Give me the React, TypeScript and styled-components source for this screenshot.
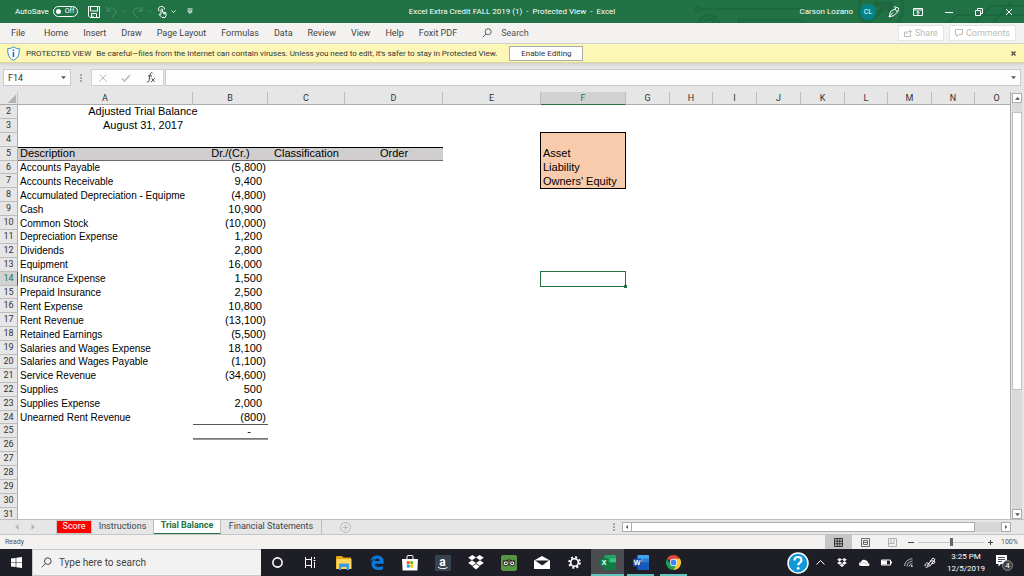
import React from "react";
import styled, { createGlobalStyle, css } from "styled-components";

const ui = `Roboto, "Open Sans", sans-serif`;
const sheetFont = `"Liberation Sans", Arial, sans-serif`;

const GlobalStyle = createGlobalStyle`
  * { box-sizing: border-box; }
  body { margin: 0; background: #e6e6e6; font-family: ${ui}; font-size: 9px; color: #444; }
  button, input { font: inherit; color: inherit; margin: 0; padding: 0; border: 0; border-radius: 0; background: none; outline: none; }
  button { cursor: pointer; white-space: nowrap; }
  svg { display: block; flex: none; }
`;

const Window = styled.div`
  display: flex;
  flex-direction: column;
  height: 100vh;
  overflow: hidden;
`;

/* Title bar */
const TitleBar = styled.header`
  position: relative;
  flex: none;
  height: 23px;
  background: #217346;
  color: #fff;
  display: grid;
  grid-template-columns: 1fr auto 1fr;
  align-items: center;
  font-size: 8px;
`;
const Circuit = styled.svg`
  position: absolute;
  right: 0;
  top: 0;
`;
const QuickAccess = styled.div`
  display: flex;
  align-items: center;
  gap: 4px;
  padding-left: 15px;
`;
const Toggle = styled.button`
  display: flex;
  align-items: center;
  gap: 4px;
  width: 25px;
  height: 11px;
  border: 1px solid #fff;
  border-radius: 6px;
  padding-left: 2px;
  font-size: 7px;
  line-height: 9px;
`;
const Knob = styled.span`
  width: 5px;
  height: 5px;
  border-radius: 50%;
  background: #fff;
`;
const IconRow = styled.div`
  display: flex;
  align-items: center;
  gap: 6px;
  padding-left: 6px;
`;
const BarButton = styled.button<{ $dim?: boolean }>`
  display: flex;
  align-items: center;
  gap: 4px;
  color: ${(p) => (p.$dim ? "#4d9068" : "#fff")};
`;
const DocTitle = styled.div`
  white-space: pre;
`;
const Account = styled.div`
  position: relative;
  display: flex;
  justify-content: flex-end;
  align-items: center;
  padding-right: 11px;
`;
const Avatar = styled.span`
  width: 16px;
  height: 16px;
  margin: 0 12px 0 7px;
  border-radius: 50%;
  background: #038387;
  font-size: 7px;
  line-height: 16px;
  text-align: center;
`;
const WindowButtons = styled.div`
  display: flex;
  align-items: center;
  gap: 22px;
`;
const AccountTools = styled.div`
  display: flex;
  align-items: center;
  gap: 14px;
  margin-right: 22px;
`;

/* Ribbon tabs */
const Ribbon = styled.nav`
  flex: none;
  height: 21px;
  display: flex;
  align-items: center;
  padding: 0 8px 0 11px;
  background: #f3f2f1;
  border-bottom: 1px solid #d2d0ce;
`;
const RibbonTabs = styled.div`
  display: flex;
  gap: 15px;
`;
const RibbonTab = styled.button`
  text-align: left;
  &:first-child { width: 18px; }
`;
const SearchLabel = styled.label`
  display: flex;
  align-items: center;
  gap: 9px;
  margin-left: 25px;
  flex: 1;
`;
const SearchInput = styled.input`
  width: 80px;
  &::placeholder { color: #555; opacity: 1; }
`;
const GhostButton = styled.button`
  display: flex;
  align-items: center;
  justify-content: center;
  gap: 3px;
  height: 16px;
  padding: 0 5px;
  margin-left: 5px;
  border: 1px solid #e6e4e2;
  background: #fff;
  color: #bdbbb9;
`;

/* Protected view notice */
const Notice = styled.div`
  flex: none;
  height: 19px;
  display: flex;
  align-items: center;
  padding: 0 8px 0 7px;
  background: #fcf7b6;
  border-bottom: 1px solid #dcd68e;
  font-size: 8px;
  color: #333;
`;
const NoticeTitle = styled.span`
  margin: 0 5px 0 6px;
  white-space: nowrap;
`;
const NoticeText = styled.span`
  white-space: nowrap;
`;
const EnableButton = styled.button`
  width: 74px;
  height: 15px;
  margin-left: 12px;
  border: 1px solid #ababab;
  background: #fdfdfd;
`;
const CloseNotice = styled.button`
  margin-left: auto;
`;

/* Formula bar */
const FormulaBar = styled.div`
  flex: none;
  height: 29px;
  display: flex;
  align-items: center;
  padding: 0 3px;
  background: linear-gradient(#d4d4d4, #e6e6e6 4px);
`;
const Field = styled.div<{ $grow?: boolean }>`
  display: flex;
  align-items: center;
  height: 17px;
  width: ${(p) => (p.$grow ? "auto" : "68px")};
  flex: ${(p) => (p.$grow ? "1" : "none")};
  padding: 0 4px;
  border: 1px solid #c8c8c8;
  background: #fdfdfd;
  color: #555;
`;
const FieldInput = styled.input`
  flex: 1;
  min-width: 0;
  color: #333;
`;
const Dots = styled.span<{ $compact?: boolean }>`
  width: 2px;
  height: 8px;
  margin: ${(p) => (p.$compact ? "0 7px 0 0" : "0 9px")};
  background: repeating-linear-gradient(#a8a8a8 0 2px, transparent 2px 3px);
`;
const FormulaTools = styled.div`
  display: flex;
  align-items: center;
  justify-content: space-around;
  width: 73px;
  height: 17px;
  margin-right: 1px;
  border: 1px solid #d0d0d0;
  background: #fdfdfd;
`;

/* Sheet */
const SheetArea = styled.main`
  flex: 1;
  min-height: 0;
  display: flex;
`;
const SheetView = styled.div`
  flex: 1;
  min-width: 0;
  overflow: hidden;
  background: linear-gradient(#e6e6e6 13px, #fff 13px);
  border-right: 1px solid #ababab;
`;
const Grid = styled.table`
  width: 1019px;
  height: 430px;
  table-layout: fixed;
  border-spacing: 0;
  font-family: ${sheetFont};
  font-size: 11px;
  line-height: 11px;
  color: #000;
`;
const Col = styled.col<{ $width: number }>`
  width: ${(p) => p.$width}px;
`;
const ColHead = styled.th<{ $active?: boolean }>`
  height: 13px;
  padding: 0;
  font: 9px/11px ${ui};
  color: ${(p) => (p.$active ? "#217346" : "#333")};
  background: ${(p) => (p.$active ? "#d2d2d2" : "#e6e6e6")};
  border-right: 1px solid #bdbdbd;
  border-bottom: 1px solid ${(p) => (p.$active ? "#217346" : "#ababab")};
`;
const Corner = styled.td`
  padding: 0;
  background: linear-gradient(135deg, transparent 50%, #b4b4b4 50%) 8px 3px / 8px 8px no-repeat #e6e6e6;
  border-right: 1px solid #c6c6c6;
  border-bottom: 1px solid #ababab;
`;
const RowHead = styled.th<{ $active?: boolean }>`
  padding: 0;
  font: 9px/11px ${ui};
  color: ${(p) => (p.$active ? "#217346" : "#333")};
  background: ${(p) => (p.$active ? "#d2d2d2" : "#e6e6e6")};
  border-right: 1px solid ${(p) => (p.$active ? "#217346" : "#ababab")};
  border-bottom: 1px solid #bdbdbd;
`;
type CellKind = "name" | "head" | "box" | "total" | "grand";
const Cell = styled.td<{ $kind?: CellKind; $align?: string; $edges?: string }>`
  position: relative;
  padding: 0 2px;
  white-space: nowrap;
  text-align: ${(p) => p.$align || "left"};
  ${(p) => p.$kind === "name" && css`font-size: 10px;`}
  ${(p) => p.$kind === "head" && css`background: #d0cece; box-shadow: inset 0 1px #000, inset 0 -1px #6a6a6a;`}
  ${(p) => p.$kind === "box" && css`background: #f8cbad;`}
  ${(p) => p.$kind === "total" && css`box-shadow: 0 1px #555;`}
  ${(p) => p.$kind === "grand" && css`box-shadow: 0 1px #777, 0 2px #999; padding-right: 17px;`}
  ${(p) => p.$edges && css`box-shadow: ${p.$edges};`}
`;
const Amount = styled.span<{ $negative: boolean }>`
  padding-right: ${(p) => (p.$negative ? 0 : 4)}px;
`;
const Selection = styled.div`
  position: absolute;
  inset: -1px 0 -1px -1px;
  border: 1px solid #217346;
  &::after {
    content: "";
    position: absolute;
    right: -2px;
    bottom: -2px;
    width: 3px;
    height: 3px;
    background: #217346;
  }
`;

/* Scroll bars */
const VScroll = styled.div`
  flex: none;
  width: 13px;
  display: flex;
  flex-direction: column;
  padding: 1px 1px 0 1px;
`;
const ScrollButton = styled.button`
  flex: none;
  display: flex;
  align-items: center;
  justify-content: center;
  width: 10px;
  height: 10px;
  border: 1px solid #ababab;
  background: #fff;
  color: #555;
`;
const VTrack = styled.div`
  flex: 1;
  width: 10px;
  padding: 9px 0 0;
  background: #dadada;
`;
const VThumb = styled.div`
  height: 70%;
  border: 1px solid #c0c0c0;
  background: #fff;
`;

/* Sheet tabs */
const TabStrip = styled.div`
  flex: none;
  height: 16px;
  display: flex;
  align-items: stretch;
  border-top: 1px solid #bdbdbd;
  border-bottom: 1px solid #c6c6c6;
  background: #e6e6e6;
`;
const TabArrows = styled.div`
  display: flex;
  align-items: center;
  gap: 10px;
  width: 56px;
  padding-left: 14px;
  color: #b4b4b4;
`;
const SheetTab = styled.button<{ $tone?: "red" | "active"; $width: number }>`
  width: ${(p) => p.$width}px;
  padding-bottom: 3px;
  border-right: 1px solid #bdbdbd;
  line-height: 10px;
  text-align: center;
  ${(p) => p.$tone === "red" && css`background: #f00; color: #fff; border: 1px solid #c6c6c6;`}
  ${(p) => p.$tone === "active" && css`background: #fff; color: #217346; font-weight: 700; border-bottom: 1px solid #217346;`}
`;
const AddSheet = styled.button`
  margin-left: 18px;
`;
const HScroll = styled.div`
  width: 398px;
  margin-left: auto;
  margin-right: 13px;
  display: flex;
  align-items: center;
`;
const HTrack = styled.div`
  flex: 1;
  height: 10px;
  background: #d6d6d6;
`;
const HThumb = styled.div`
  width: 93%;
  height: 10px;
  border: 1px solid #ababab;
  border-left: 0;
  background: #fff;
`;

/* Status bar */
const StatusBar = styled.footer`
  flex: none;
  height: 14px;
  display: flex;
  align-items: center;
  padding: 0 5px;
  background: #f3f2f1;
  font-size: 7px;
  color: #555;
`;
const ViewButton = styled.button<{ $active?: boolean; $first?: boolean }>`
  display: flex;
  align-items: center;
  justify-content: center;
  width: 27px;
  height: 14px;
  margin-left: ${(p) => (p.$first ? "auto" : "0")};
  color: ${(p) => (p.$active ? "#333" : "#666")};
  background: ${(p) => (p.$active ? "#c6c6c6" : "none")};
`;
const ZoomStep = styled.button`
  padding-left: 2px;
`;
const Zoom = styled.input`
  appearance: none;
  width: 66px;
  height: 8px;
  margin: 0 4px;
  background: linear-gradient(#c8c8c8, #c8c8c8) center / 100% 1px no-repeat;
  &::-webkit-slider-thumb { appearance: none; width: 3px; height: 8px; background: #666; }
`;
const ZoomValue = styled.span`
  width: 18px;
  margin-left: 8px;
`;

/* Taskbar */
const Taskbar = styled.div`
  flex: none;
  height: 27px;
  display: flex;
  align-items: stretch;
  background: #1e1f26;
  color: #fff;
`;
const StartButton = styled.button`
  width: 32px;
  display: flex;
  align-items: center;
  justify-content: center;
`;
const TaskSearch = styled.label`
  width: 229px;
  display: flex;
  align-items: center;
  gap: 7px;
  padding-left: 8px;
  background: #f2f2f2;
  border: 1px solid #c8c8c8;
  border-right: 0;
  color: #333;
  font-size: 10px;
`;
const TaskInput = styled.input`
  flex: 1;
  min-width: 0;
  &::placeholder { color: #444; opacity: 1; }
`;
const TaskButton = styled.button<{ $open?: boolean; $active?: boolean }>`
  width: 33px;
  display: flex;
  align-items: center;
  justify-content: center;
  background: ${(p) => (p.$active ? "#4b4c50" : "none")};
  ${(p) => p.$open && css`
    background-image: linear-gradient(#62c5bd, #62c5bd);
    background-size: ${p.$active ? "100%" : "27px"} 2px;
    background-position: bottom center;
    background-repeat: no-repeat;
  `}
`;
const Tray = styled.div`
  display: flex;
  align-items: center;
  margin-left: auto;
  padding-right: 9px;
`;
const TrayButton = styled.button`
  width: 22px;
  display: flex;
  align-items: center;
  justify-content: center;
`;
const Clock = styled.div`
  width: 44px;
  margin: 0 5px 0 3px;
  text-align: center;
  font-size: 8px;
  line-height: 12px;
`;

const Caret = () => (
  <svg width="5" height="5" viewBox="0 0 6 6" aria-hidden>
    <path d="M.5 1.800 3 4.200 5.500 1.800" fill="none" stroke="currentColor" />
  </svg>
);
const arrowRotation = { down: 0, up: 180, left: 90, right: 270 };
const Arrow = ({ dir, size = 5 }: { dir: keyof typeof arrowRotation; size?: number }) => (
  <svg width={size} height={size} viewBox="0 0 6 6" aria-hidden>
    <path d="M0 1.500h6L3 4.800z" fill="currentColor" transform={`rotate(${arrowRotation[dir]} 3 3)`} />
  </svg>
);
const Magnifier = ({ size }: { size: number }) => (
  <svg width={size} height={size} viewBox="0 0 12 12" fill="none" stroke="currentColor" aria-hidden>
    <circle cx="7.400" cy="4.500" r="3.600" />
    <path d="M4.800 7.200.8 11.200" />
  </svg>
);
const Dropbox = ({ size }: { size: number }) => (
  <svg width={size} height={size} viewBox="0 0 16 16" fill="#fff" aria-hidden>
    <path d="M4.400 0 8 2.600 4 5.300.2 2.800zM11.600 0 8 2.600l4 2.700 3.800-2.500zM.2 8 4 5.300l4 2.700-3.600 2.700zM15.800 8 12 5.300 8 8l3.600 2.700zM4.400 11.600 8 9l3.600 2.600L8 14.400z" />
  </svg>
);
const OfficeTile = ({ letter, colors }: { letter: string; colors: string[] }) => (
  <svg width="16" height="15" viewBox="0 0 16 15" aria-hidden>
    <path d="M4.500 0H15q1 0 1 1v6.500H4.500z" fill={colors[0]} />
    <path d="M10 3.500h6v4h-6z" fill={colors[1]} />
    <path d="M4.500 7.500H16V14q0 1-1 1H4.500z" fill={colors[2]} />
    <rect y="3.500" width="8.500" height="8" rx=".8" fill={colors[3]} />
    <text x="4.200" y="10" fontSize="7" fontWeight="700" fontFamily="Open Sans" fill="#fff" textAnchor="middle">{letter}</text>
  </svg>
);

const menu = ["File", "Home", "Insert", "Draw", "Page Layout", "Formulas", "Data", "Review", "View", "Help", "Foxit PDF"];
const columns: [string, number][] = [
  ["A", 175], ["B", 75], ["C", 77], ["D", 98], ["E", 98], ["F", 85], ["G", 44], ["H", 43],
  ["I", 44], ["J", 44], ["K", 44], ["L", 43], ["M", 44], ["N", 43], ["O", 44],
];
const accounts: Record<number, [string, string]> = {
  6: ["Accounts Payable", "(5,800)"],
  7: ["Accounts Receivable", "9,400"],
  8: ["Accumulated Depreciation - Equipme", "(4,800)"],
  9: ["Cash", "10,900"],
  10: ["Common Stock", "(10,000)"],
  11: ["Depreciation Expense", "1,200"],
  12: ["Dividends", "2,800"],
  13: ["Equipment", "16,000"],
  14: ["Insurance Expense", "1,500"],
  15: ["Prepaid Insurance", "2,500"],
  16: ["Rent Expense", "10,800"],
  17: ["Rent Revenue", "(13,100)"],
  18: ["Retained Earnings", "(5,500)"],
  19: ["Salaries and Wages Expense", "18,100"],
  20: ["Salaries and Wages Payable", "(1,100)"],
  21: ["Service Revenue", "(34,600)"],
  22: ["Supplies", "500"],
  23: ["Supplies Expense", "2,000"],
  24: ["Unearned Rent Revenue", "(800)"],
};
const boxSides = "-1px 0 #000, inset -1px 0 #000";
const legend: Record<number, [string, string]> = {
  4: ["", `${boxSides}, 0 -1px #000, -1px -1px #000`],
  5: ["Asset", boxSides],
  6: ["Liability", boxSides],
  7: ["Owners' Equity", `${boxSides}, 0 1px #000, -1px 1px #000`],
};
const rowNumbers = Array.from({ length: 30 }, (_, i) => i + 2);

function SheetRow({ n }: { n: number }) {
  const account = accounts[n];
  const note = legend[n];
  let left: React.ReactNode;
  if (n === 2 || n === 3) {
    left = (
      <>
        <Cell colSpan={2} $align="center">{n === 2 ? "Adjusted Trial Balance" : "August 31, 2017"}</Cell>
        <Cell /><Cell />
      </>
    );
  } else if (n === 5) {
    left = (
      <>
        <Cell $kind="head">Description</Cell>
        <Cell $kind="head" $align="center">Dr./(Cr.)</Cell>
        <Cell $kind="head" $align="center">Classification</Cell>
        <Cell $kind="head" $align="center">Order</Cell>
      </>
    );
  } else {
    left = (
      <>
        <Cell $kind="name">{account?.[0]}</Cell>
        <Cell $align="right" $kind={n === 24 ? "total" : n === 25 ? "grand" : undefined}>
          {account && <Amount $negative={account[1].startsWith("(")}>{account[1]}</Amount>}
          {n === 25 && "-"}
        </Cell>
        <Cell /><Cell />
      </>
    );
  }
  return (
    <tr>
      <RowHead scope="row" $active={n === 14}>{n}</RowHead>
      {left}
      <Cell />
      <Cell $kind={note ? "box" : undefined} $edges={note?.[1]}>
        {note?.[0]}
        {n === 14 && <Selection />}
      </Cell>
      <Cell colSpan={9} />
    </tr>
  );
}

export default function App() {
  return (
    <Window>
      <GlobalStyle />
      <TitleBar>
        <Circuit width="340" height="23" viewBox="0 0 340 23" fill="none" stroke="#1d683e" strokeWidth="2" aria-hidden>
          <circle cx="14" cy="9" r="2.500" />
          <path d="M17 9h104M60 20h54l9 4M262 24l12-9h66M290 24l16-18h34M308 24l20-23" />
          <circle cx="25" cy="25" r="10" /><circle cx="25" cy="25" r="6" />
          <circle cx="57" cy="21" r="2.500" />
          <circle cx="197" cy="8" r="22" strokeWidth="3" />
          <path d="m182 24 22-20M190 4h16v16" strokeWidth="5" />
        </Circuit>
        <QuickAccess>
          <span>AutoSave</span>
          <Toggle role="switch" aria-checked="false" aria-label="AutoSave"><Knob />Off</Toggle>
          <IconRow>
            <BarButton aria-label="Save">
              <svg width="12" height="12" viewBox="0 0 12 12" fill="none" stroke="currentColor"><path d="M.5.500h11v11H2L.5 10zM2.500.500v4.500h7V.500M3.500 11.500v-4h5v4M5 9.500v2" /></svg>
            </BarButton>
            <BarButton $dim aria-label="Undo">
              <svg width="11" height="12" viewBox="0 0 11 12" fill="none" stroke="currentColor"><path d="M1 1v4h4M1 5c2-3 5-4 7.500-2 2 2 1.500 4-.5 6L5.500 11.500" /></svg>
              <Caret />
            </BarButton>
            <BarButton $dim aria-label="Redo">
              <svg width="11" height="12" viewBox="0 0 11 12" fill="none" stroke="currentColor"><path d="M10 1v4H6M10 5C8 2 5 1 2.500 3c-2 2-1.500 4 .5 6l2.500 2.500" /></svg>
              <Caret />
            </BarButton>
            <BarButton aria-label="Touch or mouse mode">
              <svg width="9" height="12" viewBox="0 0 9 12" fill="none" stroke="currentColor"><path d="M1.300 5.300A3 3 0 1 1 6.500 3.500M3 8V3.500q.8-1.400 1.500 0V6l3.500.8V9.500L7 11.500H4L1 8.500q.8-1 2 0M5.500 6.500V8M6.800 7v1.500" /></svg>
              <Caret />
            </BarButton>
            <BarButton aria-label="Customize quick access">
              <svg width="11" height="7" viewBox="-5 0 11 7" fill="none" stroke="currentColor"><path d="M.5 1h5M.8 3 3 5.500 5.200 3z" /></svg>
            </BarButton>
          </IconRow>
        </QuickAccess>
        <DocTitle>{"Excel Extra Credit FALL 2019 (1)  -  Protected View  -  Excel"}</DocTitle>
        <Account>
          <span>Carson Lozano</span>
          <Avatar>CL</Avatar>
          <AccountTools>
            <BarButton aria-label="Pen">
              <svg width="11" height="12" viewBox="0 0 11 12" fill="none" stroke="currentColor"><path d="m1 11 1.500-5.500L7 3l2.500 3L6 9.500zM1 11l4-4.500M7 3l2-2 2 2-1.500 3M8 .5 6 1.500" /></svg>
            </BarButton>
            <BarButton aria-label="Ribbon display options">
              <svg width="10" height="8" viewBox="0 0 10 8" fill="none" stroke="currentColor"><path d="M.5.500h9v7h-9zM.5 2h9M5 7V3.500M3.300 5 5 3.400 6.700 5" /></svg>
            </BarButton>
          </AccountTools>
          <WindowButtons>
            <BarButton aria-label="Minimize"><svg width="8" height="8" viewBox="0 0 8 8"><path d="M0 4.500h8" stroke="currentColor" /></svg></BarButton>
            <BarButton aria-label="Restore"><svg width="8" height="8" viewBox="0 0 8 8" fill="none" stroke="currentColor"><path d="M.5 2.500h5v5h-5zM2.500 2.500v-2h5v5h-2" /></svg></BarButton>
            <BarButton aria-label="Close"><svg width="8" height="8" viewBox="0 0 8 8"><path d="m1 1 6 6M7 1 1 7" stroke="currentColor" /></svg></BarButton>
          </WindowButtons>
        </Account>
      </TitleBar>

      <Ribbon>
        <RibbonTabs>{menu.map((m) => <RibbonTab key={m}>{m}</RibbonTab>)}</RibbonTabs>
        <SearchLabel>
          <Magnifier size={10} />
          <SearchInput aria-label="Search" placeholder="Search" />
        </SearchLabel>
        <GhostButton>
          <svg width="8" height="8" viewBox="0 0 8 8" fill="none" stroke="currentColor"><path d="M2.500 3H.5v4.500h6V5M2.500 5C2.500 3 4 2.500 7 2.500M5.500.500l2 2-2 2" /></svg>
          Share
        </GhostButton>
        <GhostButton>
          <svg width="8" height="8" viewBox="0 0 8 8" fill="none" stroke="currentColor"><path d="M.5.500h7v5H4l-2 2v-2H.5z" /></svg>
          Comments
        </GhostButton>
      </Ribbon>

      <Notice role="alert">
        <svg width="13" height="15" viewBox="0 0 13 15" aria-hidden>
          <path d="M6.500.8c1.700 1.300 3.600 1.900 5.800 1.900 0 5.300-.6 9-5.800 11.600C1.300 11.700.7 8 .7 2.700 2.900 2.700 4.800 2.100 6.500.8z" fill="#fff" stroke="#2b88c8" />
          <path d="M6.500 3.500v1.500M6.500 6v5" stroke="#2070b8" strokeWidth="1.600" />
        </svg>
        <NoticeTitle>PROTECTED VIEW</NoticeTitle>
        <NoticeText>Be careful—files from the Internet can contain viruses. Unless you need to edit, it's safer to stay in Protected View.</NoticeText>
        <EnableButton>Enable Editing</EnableButton>
        <CloseNotice aria-label="Close message">
          <svg width="5" height="5" viewBox="0 0 5 5"><path d="m.5.500 4 4M4.500.500l-4 4" stroke="#444" strokeWidth="1.200" /></svg>
        </CloseNotice>
      </Notice>

      <FormulaBar>
        <Field>
          <FieldInput aria-label="Name box" defaultValue="F14" />
          <Arrow dir="down" size={5} />
        </Field>
        <Dots />
        <FormulaTools>
          <button aria-label="Cancel"><svg width="8" height="8" viewBox="0 0 8 8"><path d="m.5.500 7 7M7.500.500l-7 7" stroke="#b8b8b8" /></svg></button>
          <button aria-label="Enter"><svg width="10" height="8" viewBox="0 0 10 8"><path d="m1 4.500 2.500 2.500L9 1" fill="none" stroke="#b8b8b8" strokeWidth="1.500" /></svg></button>
          <button aria-label="Insert function">
            <svg width="10" height="11" viewBox="0 0 10 11" fill="none" stroke="#444"><path d="M6.500 1C5 0 4.300 1.200 4 3L3 8.500C2.700 10 2 10.500.8 10M2 4h4" /><path d="m5.500 6 3 4M9 6l-4 4" strokeWidth=".9" /></svg>
          </button>
        </FormulaTools>
        <Field $grow>
          <FieldInput aria-label="Formula bar" />
          <Arrow dir="down" size={5} />
        </Field>
      </FormulaBar>

      <SheetArea>
        <SheetView>
          <Grid>
            <colgroup>
              <Col $width={18} />
              {columns.map(([c, w]) => <Col key={c} $width={w} />)}
            </colgroup>
            <thead>
              <tr>
                <Corner />
                {columns.map(([c]) => <ColHead key={c} scope="col" $active={c === "F"}>{c}</ColHead>)}
              </tr>
            </thead>
            <tbody>{rowNumbers.map((n) => <SheetRow key={n} n={n} />)}</tbody>
          </Grid>
        </SheetView>
        <VScroll>
          <ScrollButton aria-label="Scroll up"><Arrow dir="up" /></ScrollButton>
          <VTrack><VThumb /></VTrack>
          <ScrollButton aria-label="Scroll down"><Arrow dir="down" /></ScrollButton>
        </VScroll>
      </SheetArea>

      <TabStrip>
        <TabArrows><Arrow dir="left" size={6} /><Arrow dir="right" size={6} /></TabArrows>
        <SheetTab $width={36} $tone="red">Score</SheetTab>
        <SheetTab $width={62}>Instructions</SheetTab>
        <SheetTab $width={67} $tone="active">Trial Balance</SheetTab>
        <SheetTab $width={101}>Financial Statements</SheetTab>
        <AddSheet aria-label="New sheet">
          <svg width="11" height="11" viewBox="0 0 11 11" fill="none" stroke="#b8b8b8"><circle cx="5.500" cy="5.500" r="5" /><path d="M5.500 3v5M3 5.500h5" /></svg>
        </AddSheet>
        <HScroll>
          <Dots $compact />
          <ScrollButton aria-label="Scroll left"><Arrow dir="left" size={4} /></ScrollButton>
          <HTrack><HThumb /></HTrack>
          <ScrollButton aria-label="Scroll right"><Arrow dir="right" size={4} /></ScrollButton>
        </HScroll>
      </TabStrip>

      <StatusBar>
        <span>Ready</span>
        <ViewButton $active $first aria-label="Normal view">
          <svg width="9" height="9" viewBox="0 0 9 9" fill="none" stroke="currentColor"><path d="M.5.500h8v8h-8zM3.200.500v8M5.800.500v8M.5 3.200h8M.5 5.800h8" /></svg>
        </ViewButton>
        <ViewButton aria-label="Page layout view">
          <svg width="9" height="9" viewBox="0 0 9 9" fill="none" stroke="currentColor"><path d="M.5.500h8v8h-8zM2.500 2.500h4v4h-4zM3 4.500h3" /></svg>
        </ViewButton>
        <ViewButton aria-label="Page break preview">
          <svg width="9" height="9" viewBox="0 0 9 9" fill="none" stroke="#b0b0b0"><path d="M.5.500h8v8h-8zM3 .5v5h3V.500M.5 5.500H3" /></svg>
        </ViewButton>
        <ZoomStep aria-label="Zoom out"><svg width="6" height="6" viewBox="0 0 6 6"><path d="M0 3.500h6" stroke="#444" /></svg></ZoomStep>
        <Zoom type="range" aria-label="Zoom" defaultValue={50} />
        <button aria-label="Zoom in"><svg width="5" height="5" viewBox="0 0 5 5"><path d="M0 2.500h5M2.500 0v5" stroke="#444" /></svg></button>
        <ZoomValue>100%</ZoomValue>
      </StatusBar>

      <Taskbar>
        <StartButton aria-label="Start">
          <svg width="11" height="11" viewBox="0 0 11 11" fill="#fff"><path d="M0 1.600 4.700.900v4.300H0zM5.300.800 11 0v5.200H5.300zM0 5.800h4.700v4.300L0 9.400zM5.300 5.800H11V11l-5.700-.8z" /></svg>
        </StartButton>
        <TaskSearch>
          <Magnifier size={11} />
          <TaskInput aria-label="Type here to search" placeholder="Type here to search" />
        </TaskSearch>
        <TaskButton aria-label="Cortana"><svg width="11" height="11" viewBox="0 0 11 11"><circle cx="5.500" cy="5.500" r="4.600" fill="none" stroke="#fff" strokeWidth="1.600" /></svg></TaskButton>
        <TaskButton aria-label="Task view">
          <svg width="11" height="11" viewBox="0 0 11 11" fill="none" stroke="#fff"><path d="M.5 0v2.500h6V0M.5 2.500v6h6v-6M.5 11V8.500M6.500 8.500V11M9.500 0v2M9.500 5v6M8.500 3.500h2" /></svg>
        </TaskButton>
        <TaskButton aria-label="File Explorer">
          <svg width="16" height="14" viewBox="0 0 16 14"><path d="M0 1q0-1 1-1h5l1.500 1.500H15V13H0z" fill="#e5a50e" /><path d="M.5 3h15v10H.5z" fill="#ffd55c" /><path d="M3 14V8.500q0-1 1-1h8q1 0 1 1V14h-2.500v-3h-5v3z" fill="#3a9be0" /></svg>
        </TaskButton>
        <TaskButton aria-label="Edge">
          <svg width="14" height="15" viewBox="0 0 14 15"><path d="M.3 6.800C1 2.500 3.800.400 7.200.400c4 0 6.500 2.800 6.500 6.500v1.800H4.600c.2 2.300 2 3.300 4.200 3.300 1.500 0 2.900-.4 4.100-1.100v3c-1.300.7-3 1.100-4.700 1.100C4.200 15 1.600 12.500 1.600 9.300c0-2.500 1.300-4.500 3.500-5.600C3 3.900 1.200 5.200.3 6.800zM4.700 6h5c0-1.600-.8-2.600-2.300-2.600S5 4.400 4.700 6z" fill="#0a7bdc" /></svg>
        </TaskButton>
        <TaskButton aria-label="Store">
          <svg width="16" height="16" viewBox="0 0 16 16"><path d="M5 4V1.500Q5 .500 6 .500h4q1 0 1 1V4" fill="none" stroke="#fff" /><path d="M0 4h16l-.6 11.500H.6z" fill="#fff" /><path d="M4.800 6.200h2.900v2.900H4.800z" fill="#f25022" /><path d="M8.300 6.200h2.900v2.900H8.300z" fill="#7fba00" /><path d="M4.800 9.700h2.900v2.900H4.800z" fill="#00a4ef" /><path d="M8.300 9.700h2.900v2.900H8.300z" fill="#ffb900" /></svg>
        </TaskButton>
        <TaskButton aria-label="Amazon">
          <svg width="16" height="16" viewBox="0 0 16 16"><rect width="16" height="16" rx="1" fill="#36424f" /><text x="7.500" y="10.500" fontSize="12" fontWeight="700" fontFamily="Roboto" fill="#fff" textAnchor="middle">a</text><path d="M3 12.300c3 1.800 6.500 1.800 9.500.2" fill="none" stroke="#fff" /></svg>
        </TaskButton>
        <TaskButton aria-label="Dropbox"><Dropbox size={16} /></TaskButton>
        <TaskButton aria-label="Tripadvisor">
          <svg width="16" height="16" viewBox="0 0 16 16"><rect width="16" height="16" rx="2" fill="#589442" /><path d="M1.500 5.500h3Q8 3.500 11.500 5.500h3L13.500 7 8 6.500 2.500 7z" fill="#222" /><g fill="#fff" stroke="#222"><circle cx="4.800" cy="8.300" r="2.500" /><circle cx="11.200" cy="8.300" r="2.500" /></g><circle cx="4.800" cy="8.300" r="1" fill="#222" /><circle cx="11.200" cy="8.300" r="1" fill="#222" /><path d="m7 5.500 1 1.500 1-1.500z" fill="#f0a030" /><path d="m7.200 9.500.8 1.500.8-1.500z" fill="#222" /></svg>
        </TaskButton>
        <TaskButton aria-label="Mail">
          <svg width="16" height="13" viewBox="0 0 16 13"><path d="M0 4.500 8 0l8 4.500V13H0z" fill="#fff" /><path d="M1 4.500h14L9 8.800 12.500 8 8 9.200z" fill="#1e1f26" /></svg>
        </TaskButton>
        <TaskButton aria-label="Settings">
          <svg width="13" height="13" viewBox="0 0 13 13" fill="none" stroke="#fff"><circle cx="6.500" cy="6.500" r="5.300" strokeWidth="2" strokeDasharray="2.100 2.060" /><circle cx="6.500" cy="6.500" r="3.800" strokeWidth="1.600" /></svg>
        </TaskButton>
        <TaskButton aria-label="Excel" $open $active><OfficeTile letter="X" colors={["#21a366", "#33c481", "#107c41", "#0d7a3f"]} /></TaskButton>
        <TaskButton aria-label="Word" $open><OfficeTile letter="W" colors={["#41a5ee", "#2b7cd3", "#185abd", "#1a50b0"]} /></TaskButton>
        <TaskButton aria-label="Chrome" $open>
          <svg width="15" height="15" viewBox="0 0 16 16"><path d="M8 8 1.070 4A8 8 0 0 1 14.930 4z" fill="#e0463a" /><path d="M8 8V4h6.930A8 8 0 0 1 8 16z" fill="#fcc934" /><path d="M8 16A8 8 0 0 1 1.070 4L4.600 10 8 12l3.400-2z" fill="#1e9e50" /><circle cx="8" cy="8" r="3.900" fill="#fff" /><circle cx="8" cy="8" r="3.100" fill="#4285f4" /></svg>
        </TaskButton>
        <Tray>
          <TrayButton aria-label="Help">
            <svg width="22" height="22" viewBox="0 0 22 22"><circle cx="11" cy="11" r="10" fill="#0f97d7" stroke="#fff" strokeWidth="1.500" /><path d="M7.500 8.500C7.500 6 9 5 11 5s3.500 1.200 3.500 3.200c0 2.500-3.300 2.500-3.300 5.100" fill="none" stroke="#fff" strokeWidth="2.200" /><circle cx="11.200" cy="16.300" r="1.400" fill="#fff" /></svg>
          </TrayButton>
          <TrayButton aria-label="Show hidden icons"><svg width="9" height="5" viewBox="0 0 9 5"><path d="m.5 4.500 4-4 4 4" fill="none" stroke="#fff" /></svg></TrayButton>
          <TrayButton aria-label="Dropbox status"><Dropbox size={10} /></TrayButton>
          <TrayButton aria-label="OneDrive">
            <svg width="11" height="7" viewBox="0 0 11 7"><path d="M2 7a2 2 0 0 1 0-4A3 3 0 0 1 7 1.500 2.500 2.500 0 0 1 9 4a1.500 1.500 0 0 1 0 3z" fill="#fff" /><path d="M1 4.500q4-2.500 8 1" fill="none" stroke="#8a8a90" strokeWidth=".5" /></svg>
          </TrayButton>
          <TrayButton aria-label="Battery"><svg width="11" height="7" viewBox="0 0 11 7"><path d="M.5 1h9v5h-9zM10.500 2.500v2" fill="none" stroke="#fff" /><path d="M1 1.500h5v4H1z" fill="#fff" /></svg></TrayButton>
          <TrayButton aria-label="Wi-Fi"><svg width="9" height="9" viewBox="0 0 9 9" fill="none" stroke="#c8c8cc" strokeWidth=".9"><path d="M.5 8A8 8 0 0 1 8.500.700M3 8.500A6 6 0 0 1 8.500 3M5 8.500A4 4 0 0 1 8.500 5.300" /><circle cx="7.700" cy="8" r=".7" fill="#fff" /></svg></TrayButton>
          <TrayButton aria-label="Pen workspace"><svg width="12" height="11" viewBox="0 0 12 11" fill="none" stroke="#fff"><path d="M1 9c0-3 3-4 4-2s-2 4-3.500 3M3 9l6-8 2 1.500-5.500 7M6 4h4.500q1 2-1 2.500H7.500" /></svg></TrayButton>
          <Clock>3:25 PM<br />12/5/2019</Clock>
          <TrayButton aria-label="Notifications, 4 new">
            <svg width="17" height="17" viewBox="0 0 17 17"><path d="M0 1h11v9H5l-2.500 2.500V10H0z" fill="#fff" /><path d="M2 3.500h7M2 5.500h7M2 7.500h4" stroke="#1e1f26" strokeWidth=".8" /><circle cx="11.500" cy="11.500" r="4.900" fill="#3d3e45" stroke="#a8a8ac" strokeWidth=".8" /><text x="11.500" y="14.300" fontSize="8" fontFamily="Roboto" fill="#fff" textAnchor="middle">4</text></svg>
          </TrayButton>
        </Tray>
      </Taskbar>
    </Window>
  );
}
